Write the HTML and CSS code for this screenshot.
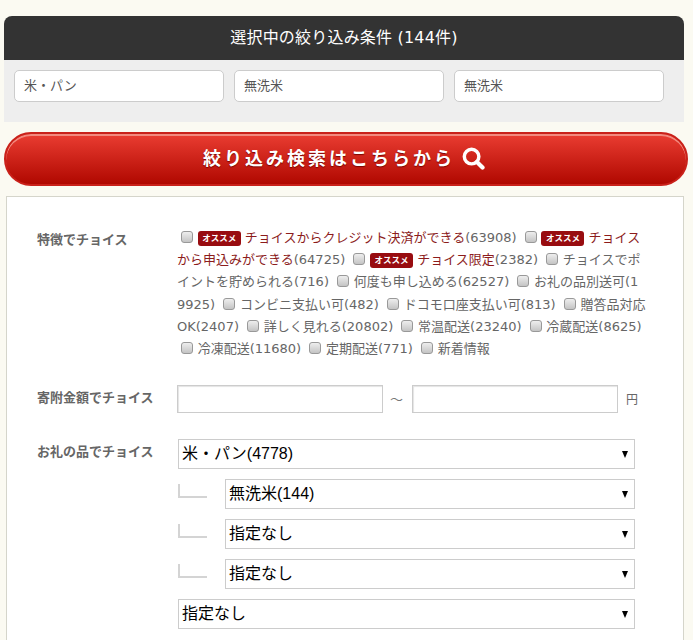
FILE: index.html
```html
<!DOCTYPE html>
<html lang="ja">
<head>
  <meta charset="UTF-8">
  <meta name="viewport" content="width=device-width, initial-scale=1.0">
  <title>絞り込み検索</title>
  <link rel="stylesheet" href="styles.css">
</head>
<body>
  <section class="selected">
    <h2>選択中の絞り込み条件 (144件)</h2>
    <div class="chips">
      <div class="chip">米・パン</div>
      <div class="chip">無洗米</div>
      <div class="chip">無洗米</div>
    </div>
  </section>

  <button class="search-btn">
    <span>絞り込み検索はこちらから</span>
    <svg class="search-icon" width="23" height="23" viewBox="0 0 24 24">
      <circle cx="10" cy="10" r="7.6" fill="none" stroke="#fff" stroke-width="3.6"/>
      <path d="M15.6 15.6 L21.4 21.4" fill="none" stroke="#fff" stroke-width="4.4" stroke-linecap="round"/>
    </svg>
  </button>

  <form class="panel">
    <div class="row">
      <div class="row-label">特徴でチョイス</div>
      <div class="features">
        <label><input type="checkbox"> <span class="badge">オススメ</span> <span class="rec">チョイスからクレジット決済ができる</span>(63908)</label>
        <label><input type="checkbox"> <span class="badge">オススメ</span> <span class="rec">チョイスから申込みができる</span>(64725)</label>
        <label><input type="checkbox"> <span class="badge">オススメ</span> <span class="rec">チョイス限定</span>(2382)</label>
        <label><input type="checkbox"> チョイスでポイントを貯められる(716)</label>
        <label><input type="checkbox"> 何度も申し込める(62527)</label>
        <label><input type="checkbox"> お礼の品別送可(19925)</label>
        <label><input type="checkbox"> コンビニ支払い可(482)</label>
        <label><input type="checkbox"> ドコモ口座支払い可(813)</label>
        <label><input type="checkbox"> 贈答品対応OK(2407)</label>
        <label><input type="checkbox"> 詳しく見れる(20802)</label>
        <label><input type="checkbox"> 常温配送(23240)</label>
        <label><input type="checkbox"> 冷蔵配送(8625)</label>
        <label><input type="checkbox"> 冷凍配送(11680)</label>
        <label><input type="checkbox"> 定期配送(771)</label>
        <label><input type="checkbox"> 新着情報</label>
      </div>
    </div>

    <div class="row">
      <div class="row-label">寄附金額でチョイス</div>
      <div class="amount">
        <input type="text">
        <span class="tilde">～</span>
        <input type="text">
        <span class="yen">円</span>
      </div>
    </div>

    <div class="row">
      <div class="row-label">お礼の品でチョイス</div>
      <div class="selects">
        <div class="select-box">
          <select><option>米・パン(4778)</option></select>
        </div>
        <div class="sub">
          <i class="branch"></i>
          <div class="select-box">
            <select><option>無洗米(144)</option></select>
          </div>
        </div>
        <div class="sub">
          <i class="branch"></i>
          <div class="select-box">
            <select><option>指定なし</option></select>
          </div>
        </div>
        <div class="sub">
          <i class="branch"></i>
          <div class="select-box">
            <select><option>指定なし</option></select>
          </div>
        </div>
        <div class="select-box">
          <select><option>指定なし</option></select>
        </div>
      </div>
    </div>
  </form>
</body>
</html>
```

FILE: styles.css
```css
html {
  overflow: hidden;
}
body {
  margin: 0;
  height: 640px;
  padding: 16px 0 0 4px;
  box-sizing: border-box;
  overflow: hidden;
  background: #fbfaf2;
  color: #666;
  font-family: "DejaVu Sans", "Noto Sans CJK JP", sans-serif;
  font-size: 13px;
}

.selected {
  width: 680px;
}
.selected h2 {
  margin: 0;
  height: 44px;
  background: #333;
  border-radius: 8px 8px 0 0;
  color: #fff;
  font-size: 16px;
  font-weight: normal;
  letter-spacing: 0.2px;
  line-height: 44px;
  text-align: center;
}
.chips {
  display: flex;
  gap: 10px;
  padding: 10px 10px 20px;
  background: #eee;
}
.chip {
  box-sizing: border-box;
  width: 210px;
  height: 32px;
  padding-left: 9px;
  background: #fff;
  border: 1px solid #ccc;
  border-radius: 5px;
  color: #555;
  line-height: 29px;
}

.search-btn {
  display: flex;
  align-items: center;
  justify-content: center;
  gap: 7px;
  box-sizing: border-box;
  width: 684px;
  height: 54px;
  margin-top: 10px;
  padding: 0 4px 4px 0;
  background: linear-gradient(to bottom, #ea3d32, #b00800);
  border: 2px solid #c9211a;
  border-radius: 27px;
  box-shadow: inset 0 2px 0 #f28a7f;
  color: #fff;
  font-family: inherit;
  font-size: 18px;
  font-weight: bold;
  letter-spacing: 3px;
  text-shadow: 0 1px 1px #7a0500;
}
.search-icon {
  display: block;
  margin-top: 2px;
}

.panel {
  box-sizing: border-box;
  width: 678px;
  margin: 10px 0 0 2px;
  padding: 30px 30px 30px;
  background: #fff;
  border: 1px solid #d5d5cb;
}
.row {
  display: grid;
  grid-template-columns: 140px 1fr;
  margin-bottom: 26px;
}
.row:first-child {
  margin-bottom: 25px;
}
.row-label {
  padding-top: 2px;
  font-weight: bold;
  line-height: 22px;
}

.features {
  width: 469px;
  line-height: 22.2px;
  word-break: break-all;
}
.features input {
  appearance: none;
  box-sizing: border-box;
  width: 12px;
  height: 12px;
  margin: 0 0.5px 3px 4px;
  vertical-align: middle;
  background: linear-gradient(to bottom, #eee, #c4c4c4);
  border: 1px solid #999;
  border-radius: 3px;
}
.badge {
  display: inline-block;
  width: 43px;
  height: 15px;
  background: #980c10;
  border-radius: 3px;
  color: #fff;
  font-size: 8.5px;
  font-weight: bold;
  line-height: 14px;
  text-align: center;
  vertical-align: 1px;
}
.rec {
  color: #8c1c1c;
}

.amount {
  display: flex;
  align-items: center;
}
.amount input {
  box-sizing: border-box;
  width: 206px;
  height: 28px;
  padding: 0 4px;
  border: 1px solid #ccc;
  border-radius: 0;
  box-shadow: inset 1px 1px 1px #e4e4e4;
}
.tilde {
  width: 29px;
  margin: -2px 0 0 -1px;
  padding-right: 1px;
  color: #777;
  text-align: center;
}
.yen {
  margin: -2px 0 0 8px;
  font-size: 12px;
}

.selects {
  display: flex;
  flex-direction: column;
  gap: 10px;
  width: 457px;
  margin-left: 1px;
}
.sub {
  display: flex;
  gap: 18px;
}
.branch {
  flex: none;
  box-sizing: border-box;
  width: 29px;
  height: 14px;
  margin-top: 5px;
  border-left: 2px solid #d4d4d4;
  border-bottom: 2px solid #d4d4d4;
}
.select-box {
  position: relative;
  width: 100%;
}
.select-box::after {
  content: "";
  position: absolute;
  top: 12px;
  right: 7px;
  border-top: 7px solid #000;
  border-left: 3px solid transparent;
  border-right: 3px solid transparent;
}
.select-box select {
  display: block;
  appearance: none;
  box-sizing: border-box;
  width: 100%;
  height: 30px;
  padding: 0 3px 2px;
  background: #fff;
  border: 1px solid #ccc;
  border-radius: 0;
  color: #000;
  font-family: "Liberation Sans", "Noto Sans CJK JP", sans-serif;
  font-size: 16px;
}
```
